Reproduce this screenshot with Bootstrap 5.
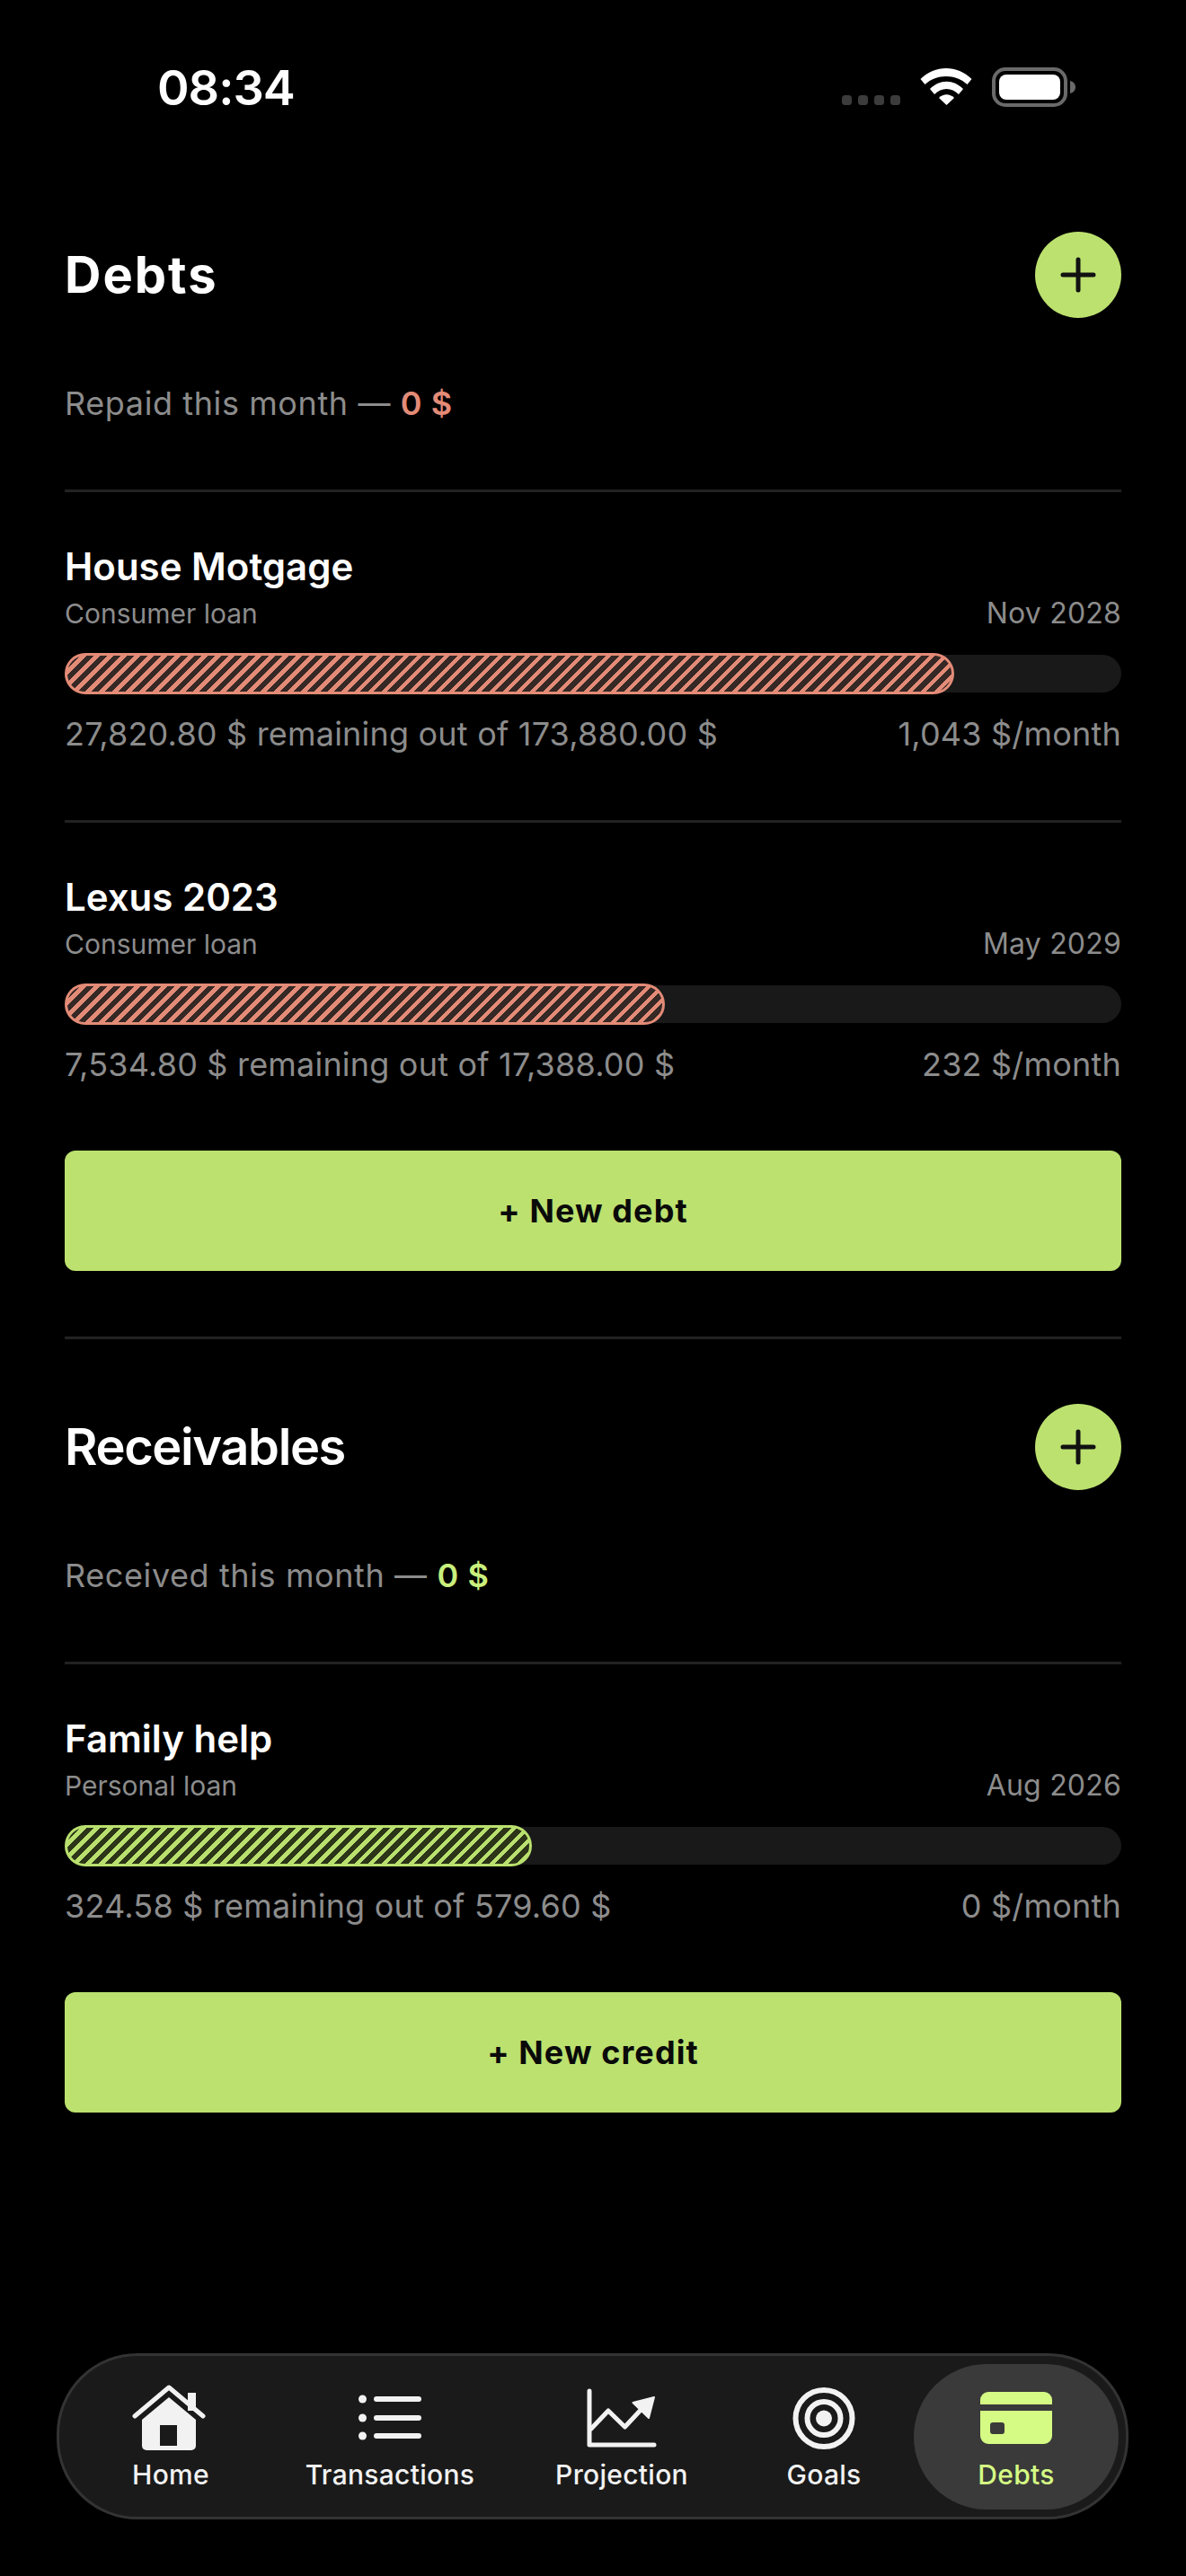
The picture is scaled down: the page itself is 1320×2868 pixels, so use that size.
<!DOCTYPE html>
<html lang="en">
<head>
<meta charset="utf-8">
<title>Debts</title>
<link href="https://cdn.jsdelivr.net/npm/bootstrap@5.3.0/dist/css/bootstrap.min.css" rel="stylesheet">
<style>
html,body{background:#000;margin:0}
body{font-family:"Inter","Liberation Sans",sans-serif;color:#fff}
.phone{width:1320px;height:2868px;background:#000;overflow:hidden}
.statusbar{height:258px;padding:71px 72px 0 175px;align-items:flex-start}
.clock{font-size:54px;font-weight:600;line-height:54px;letter-spacing:-1px;color:#fff}
.status-icons{margin-right:50px;margin-top:4px}
.content{padding:0 72px}
.head-row{height:96px}
.sec-title{font-size:56px;font-weight:700;line-height:96px;margin:0;letter-spacing:2px}
.sec-title.wide{font-weight:600;letter-spacing:-1.4px}
.add-btn{width:96px;height:96px;border-radius:50%;background:#bce16f;border:0;padding:0}
.summary{font-size:36px;line-height:48px;color:#8c8c8c;margin-top:71px;margin-bottom:72px;letter-spacing:.6px}
.summary b{font-weight:600}
.neg{color:#e38b77}
.pos{color:#c9ef7c}
.debt-item{border-top:3px solid #222;padding:55px 0 72px}
.item-title{font-size:42px;font-weight:600;line-height:55px;color:#fff}
.item-sub{font-size:30px;line-height:40px;color:#8c8c8c;margin-top:5px}
.item-date{font-size:32px;letter-spacing:.2px}
.track{height:42px;margin-top:26px;background:#191919;border-radius:21px;overflow:visible}
.fill{height:46px;margin:-2px 0;border-radius:23px;flex:none}
.fill-neg{border:3px solid #e38b77;background:repeating-linear-gradient(135deg,#e38b77 0 4.4px,#352825 4.4px 10.6px)}
.fill-pos{border:3px solid #b9e06e;background:repeating-linear-gradient(135deg,#b9e06e 0 4.4px,#2c3518 4.4px 10.6px)}
.item-foot{font-size:36px;line-height:48px;color:#8c8c8c;margin-top:22px;letter-spacing:.2px}
.cta{display:block;width:100%;height:134px;background:#bce16f;border:0;border-radius:12px;color:#0a0a0a;font-size:36px;font-weight:700;letter-spacing:1.1px}
.cta:hover{background:#bce16f;color:#0a0a0a}
.rule{border-top:3px solid #222;margin-top:73px;padding-top:72px}
.tabbar{width:1193px;height:185px;margin:0 0 0 63px;background:#1a1a1a;border:3px solid #333;border-radius:90px;padding:9px 8px 8px 0;display:grid;grid-template-columns:248px 240px 276px 174px 241px}
.tab{display:flex;flex-direction:column;align-items:center;padding-top:23px;color:#f2f2f2;font-size:30px;font-weight:500;line-height:36px;letter-spacing:.3px;text-decoration:none}
.tab svg{display:block;margin-bottom:6px}
.tab-on{justify-self:end;width:228px;background:#3a3a3a;border-radius:81px;color:#d5fb84}
.spacer{height:268px}
</style>
</head>
<body>
<div class="phone d-flex flex-column">
  <div class="statusbar d-flex justify-content-between">
    <div class="clock">08:34</div>
    <svg class="status-icons" width="262" height="46" viewBox="0 0 262 46" aria-hidden="true">
      <g fill="#3c3c3c"><rect x="1" y="31" width="11" height="11" rx="3.5"/><rect x="19" y="31" width="11" height="11" rx="3.5"/><rect x="37" y="31" width="11" height="11" rx="3.5"/><rect x="55" y="31" width="11" height="11" rx="3.5"/></g>
      <g fill="#fff">
        <path d="M89 13 C105 -3 130 -3 146 13 L141 19 C128 7 107 7 94 19Z" transform="translate(-.5 0) scale(1 1)"/>
        <path d="M99 24 C110 13 125 13 136 24 L131 30 C123 22 112 22 104 30Z"/>
        <path d="M109 34 C114 29 121 29 126 34 L117.5 42Z"/>
      </g>
      <rect x="170" y="2" width="80" height="40" rx="13" fill="none" stroke="#6a6a6a" stroke-width="4"/>
      <rect x="176" y="8" width="68" height="28" rx="8" fill="#fff"/>
      <path d="M255 15 C259 16 261 19 261 22 C261 25 259 28 255 29Z" fill="#6a6a6a"/>
    </svg>
  </div>

  <div class="content">
    <div class="head-row d-flex justify-content-between align-items-center">
      <h1 class="sec-title">Debts</h1>
      <button class="add-btn btn" type="button" aria-label="Add debt"><svg width="96" height="96" viewBox="0 0 96 96"><path d="M48 31V65M31 48H65" stroke="#111" stroke-width="5" stroke-linecap="round"/></svg></button>
    </div>
    <div class="summary">Repaid this month — <b class="neg">0 $</b></div>

    <div class="debt-item">
      <div class="item-title">House Motgage</div>
      <div class="item-sub d-flex justify-content-between align-items-center"><span>Consumer loan</span><span class="item-date">Nov 2028</span></div>
      <div class="track d-flex"><div class="fill fill-neg" style="width:990px"></div></div>
      <div class="item-foot d-flex justify-content-between"><span>27,820.80 $ remaining out of 173,880.00 $</span><span>1,043 $/month</span></div>
    </div>

    <div class="debt-item pb-0">
      <div class="item-title">Lexus 2023</div>
      <div class="item-sub d-flex justify-content-between align-items-center"><span>Consumer loan</span><span class="item-date">May 2029</span></div>
      <div class="track d-flex"><div class="fill fill-neg" style="width:668px"></div></div>
      <div class="item-foot d-flex justify-content-between"><span>7,534.80 $ remaining out of 17,388.00 $</span><span>232 $/month</span></div>
    </div>

    <button class="cta btn" type="button" style="margin-top:72px">+ New debt</button>

    <div class="rule">
      <div class="head-row d-flex justify-content-between align-items-center">
        <h2 class="sec-title wide">Receivables</h2>
        <button class="add-btn btn" type="button" aria-label="Add receivable"><svg width="96" height="96" viewBox="0 0 96 96"><path d="M48 31V65M31 48H65" stroke="#111" stroke-width="5" stroke-linecap="round"/></svg></button>
      </div>
      <div class="summary">Received this month — <b class="pos">0 $</b></div>
    </div>

    <div class="debt-item pb-0">
      <div class="item-title">Family help</div>
      <div class="item-sub d-flex justify-content-between align-items-center"><span>Personal loan</span><span class="item-date">Aug 2026</span></div>
      <div class="track d-flex"><div class="fill fill-pos" style="width:520px"></div></div>
      <div class="item-foot d-flex justify-content-between"><span>324.58 $ remaining out of 579.60 $</span><span>0 $/month</span></div>
    </div>

    <button class="cta btn" type="button" style="margin-top:72px">+ New credit</button>
  </div>

  <div class="spacer"></div>

  <nav class="tabbar">
    <a class="tab" href="#">
      <svg width="100" height="76" viewBox="0 0 100 76" aria-hidden="true">
        <path d="M69 9h9v20h-9z" fill="#f2f2f2"/>
        <path d="M48 14 L78 39 V68 a5 5 0 0 1-5 5 H23 a5 5 0 0 1-5-5 V39Z" fill="#f2f2f2"/>
        <path d="M38 45h19v23H38z" fill="#1a1a1a"/>
        <path d="M10 35 L48 3 L86 35" fill="none" stroke="#f2f2f2" stroke-width="5" stroke-linecap="round" stroke-linejoin="round"/>
      </svg>Home</a>
    <a class="tab" href="#">
      <svg width="100" height="76" viewBox="0 0 100 76" aria-hidden="true">
        <g fill="#f2f2f2"><circle cx="19.5" cy="16" r="4.5"/><circle cx="19.5" cy="37" r="4.5"/><circle cx="19.5" cy="57" r="4.5"/></g>
        <path d="M35 16H82M35 37H82M35 57H82" stroke="#f2f2f2" stroke-width="6" stroke-linecap="round"/>
      </svg>Transactions</a>
    <a class="tab" href="#">
      <svg width="100" height="76" viewBox="0 0 100 76" aria-hidden="true">
        <path d="M14 7V67H86" fill="none" stroke="#f2f2f2" stroke-width="5" stroke-linecap="round" stroke-linejoin="round"/>
        <path d="M16 49 L35 29 L53.500 47 L74 25" fill="none" stroke="#f2f2f2" stroke-width="5" stroke-linecap="round" stroke-linejoin="round"/>
        <path d="M86 14 L62.500 20 L80 37Z" fill="#f2f2f2" stroke="#f2f2f2" stroke-width="2" stroke-linejoin="round"/>
      </svg>Projection</a>
    <a class="tab" href="#">
      <svg width="100" height="76" viewBox="0 0 100 76" aria-hidden="true">
        <g fill="none" stroke="#f2f2f2" stroke-width="6"><circle cx="50" cy="37.500" r="31.500"/><circle cx="50" cy="37.500" r="18.500"/></g>
        <circle cx="50" cy="37.500" r="9" fill="#f2f2f2"/>
      </svg>Goals</a>
    <a class="tab tab-on" href="#">
      <svg width="100" height="76" viewBox="0 0 100 76" aria-hidden="true">
        <path d="M10 22V17a9 9 0 0 1 9-9H81a9 9 0 0 1 9 9V22Z" fill="#d5fb84"/>
        <path fill-rule="evenodd" d="M10 29H90V57a9 9 0 0 1-9 9H19a9 9 0 0 1-9-9ZM24 42a3 3 0 0 0-3 3v7a3 3 0 0 0 3 3h10a3 3 0 0 0 3-3v-7a3 3 0 0 0-3-3Z" fill="#d5fb84"/>
      </svg>Debts</a>
  </nav>
</div>
<script src="https://cdn.jsdelivr.net/npm/bootstrap@5.3.0/dist/js/bootstrap.bundle.min.js"></script>
</body>
</html>
